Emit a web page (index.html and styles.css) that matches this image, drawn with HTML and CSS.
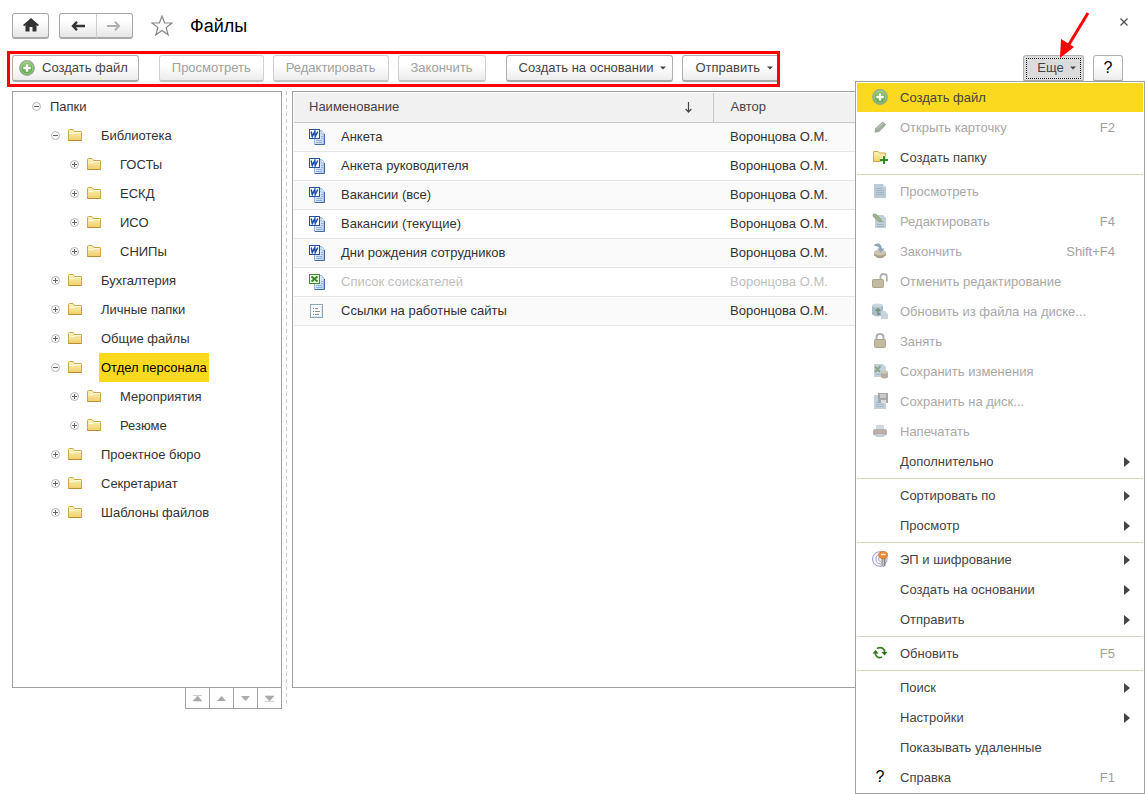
FILE: index.html
```html
<!DOCTYPE html>
<html lang="ru">
<head>
<meta charset="utf-8">
<title>Файлы</title>
<link rel="stylesheet" href="styles.css">
</head>
<body>
<svg class="defs" aria-hidden="true">
  <defs>
    <linearGradient id="gFolder" x1="0" y1="0" x2="0" y2="1"><stop offset="0" stop-color="#fdf6c4"/><stop offset="1" stop-color="#efcf68"/></linearGradient>
    <linearGradient id="gDoc" x1="0" y1="0" x2="1" y2="1"><stop offset="0" stop-color="#ffffff"/><stop offset="1" stop-color="#b3cdf0"/></linearGradient>
    <radialGradient id="gAdd" cx=".5" cy=".3" r=".7"><stop offset="0" stop-color="#a3d57e"/><stop offset="1" stop-color="#4f9c3c"/></radialGradient>
  </defs>
  <symbol id="add" viewBox="0 0 16 16"><circle cx="8" cy="8" r="7.3" fill="url(#gAdd)" stroke="#98a896" stroke-width="1.2"/><circle cx="8" cy="8" r="6" fill="none" stroke="#c4e2b2" stroke-width=".6"/><path d="M6.500 4h3v2.500h2.500v3H9.500V12h-3V9.500H4v-3h2.500z" fill="#fff" stroke="#5c9b4c" stroke-width=".5"/></symbol>
  <symbol id="folder" viewBox="0 0 16 16"><path d="M1.500 13.500V3.500q0-1 1-1h3.500l1.500 2H14q.5 0 .5.5v8.500z" fill="url(#gFolder)" stroke="#cda84a"/><path d="M2.500 6.500h5l1-1h5.500" stroke="#fffbe0" fill="none"/><path d="M1.500 13.500h13" stroke="#b88e35"/></symbol>
  <symbol id="plus" viewBox="0 0 11 11"><circle cx="5.500" cy="5.500" r="4" fill="#fff" stroke="#b4b4b4"/><path d="M3 5.500h5M5.500 3v5" stroke="#666"/></symbol>
  <symbol id="minus" viewBox="0 0 11 11"><circle cx="5.500" cy="5.500" r="4" fill="#fff" stroke="#b4b4b4"/><path d="M3 5.500h5" stroke="#666"/></symbol>
  <symbol id="word" viewBox="0 0 16 16"><path d="M5.500 1.500h7l2.500 3v11H5.500z" fill="url(#gDoc)" stroke="#8fb0dc"/><path d="M12 1.500V5h3" fill="#fff" stroke="#9ab8df"/><path d="M7 11.500h6M7 13.500h6M12 7.500h2M12 9.500h2" stroke="#8fb0dc"/><path d="M15.500 5v10.500H6" stroke="#46699f" fill="none"/><rect x=".5" y=".5" width="10" height="9" fill="#fff" stroke="#2351a3"/><path d="M2.200 2.500L3.300 7.500l2.500-5L6.200 7.500l2.600-5" fill="none" stroke="#1d4da8" stroke-width="1.500"/></symbol>
  <symbol id="excel" viewBox="0 0 16 16"><path d="M5.500 1.500h7l2.500 3v11H5.500z" fill="url(#gDoc)" stroke="#8fb0dc"/><path d="M7 11.500h6M7 13.500h6M12 7.500h2M12 9.500h2" stroke="#8fb0dc"/><path d="M15.500 5v10.500H6" stroke="#46699f" fill="none"/><rect x=".5" y=".5" width="10" height="9" fill="#eaf5e4" stroke="#3e8d2e"/><path d="M2.500 2.500l6 5M8.500 2.500l-6 5" stroke="#2f8522" stroke-width="1.800"/></symbol>
  <symbol id="text" viewBox="0 0 16 16"><rect x="1.500" y="1.500" width="12" height="13" fill="#f8fcfe" stroke="#8ca9bb"/><path d="M3 13.500h9.500V3" stroke="#dce8ef" fill="none"/><path d="M4 5.500h1M4 8.500h1M4 11.500h1" stroke="#777"/><path d="M6 5.500h3M6 8.500h5M6 11.500h4" stroke="#929292"/></symbol>
  <symbol id="pencil" viewBox="0 0 16 16"><path d="M3 9.500l7-6.500q.8-.6 1.500.1l2 1.900q.6.700 0 1.400L7 13l-4.500.7z" fill="#a1ae9f"/><path d="M5 9.500l6-5.500" stroke="#c8d1c4"/></symbol>
  <symbol id="newfolder" viewBox="0 0 16 16"><path d="M1.500 12.500V3q0-.5.5-.5h4l1.500 1.500h6v8.500z" fill="url(#gFolder)" stroke="#cda84a"/><path d="M10.500 6.500h3v3H16v3h-2.500v3h-3v-3H8v-3h2.500z" fill="#fff"/><path d="M12 7v8M8 11h8" stroke="#2f8c1e" stroke-width="2"/></symbol>
  <symbol id="doc" viewBox="0 0 16 16"><path d="M2 1h9l3 3v11H2z" fill="#bccbd5"/><path d="M11 1v3h3" fill="#dce5eb"/><path d="M4 5.500h6M4 7.500h8M4 9.500h8M4 11.500h8" stroke="#9fb6c6"/></symbol>
  <symbol id="docedit" viewBox="0 0 16 16"><path d="M3 2h8l3 3v10H3z" fill="#c0cfd8"/><path d="M5 11.500h7M5 13.500h7M9 8.500h3" stroke="#9fb6c6"/><path d="M1 1h3l5.500 5.500L9 9l-2.500-.5L1 3.500z" fill="#9bb28e" stroke="#879c7c" stroke-width=".5"/></symbol>
  <symbol id="finish" viewBox="0 0 16 16"><path d="M2 9v3.500q6 5.500 12 0V9z" fill="#aaa28f"/><ellipse cx="8" cy="9.500" rx="6" ry="3" fill="#ccc5b4"/><path d="M2.500 1.500q6-3 7.500 4h2.500L9 9.500 5 5.500h2.300Q6.500 2.500 2.500 3z" fill="#8fa5b3"/></symbol>
  <symbol id="unlock" viewBox="0 0 16 16"><path d="M8.500 6V3.500q0-2.500 3-2.500t3.300 2.500v5" fill="none" stroke="#b0b0b0" stroke-width="1.800"/><rect x=".5" y="6.500" width="11" height="8" rx="1" fill="#c3baa2" stroke="#ada48e"/></symbol>
  <symbol id="diskupd" viewBox="0 0 16 16"><path d="M0 2.500v9Q5 15 11 12V2.500z" fill="#a7bcc6"/><ellipse cx="5.500" cy="2.500" rx="5.500" ry="2" fill="#c9d6dc"/><path d="M9 8h4l3 3v5H9z" fill="#c5d4dd"/><path d="M8.500 11H6V6M3.800 8L6 5.700 8.200 8" fill="none" stroke="#719078" stroke-width="1.300"/></symbol>
  <symbol id="lock" viewBox="0 0 16 16"><path d="M4.500 7V4q0-3 3.500-3t3.500 3v3" fill="none" stroke="#b1b1b1" stroke-width="2"/><rect x="2.500" y="6.500" width="11" height="8" rx="1" fill="#c3baa2" stroke="#ada48e"/></symbol>
  <symbol id="savechg" viewBox="0 0 16 16"><path d="M2 1h9l3 3v10H2z" fill="#c3d2dd"/><path d="M4 11.500h6" stroke="#9fb6c6"/><path d="M3 3.500l5 5.500M8.500 3L3 9" stroke="#8da58d" stroke-width="2"/><path d="M9 9v5.500q3.500 2 7 0V9z" fill="#b6ae9b"/><ellipse cx="12.500" cy="9" rx="3.500" ry="1.700" fill="#d0c9ba"/></symbol>
  <symbol id="savedisk" viewBox="0 0 16 16"><path d="M2 2h12v14H2z" fill="#c1d2de"/><path d="M4 11.500h8M4 13.500h8M4 9.500h8" stroke="#9fbacd"/><path d="M6 0h10v10H7L6 9z" fill="#a7a7a7"/><path d="M8 1h6v4H8z" fill="#c9c9c9"/><path d="M9 7h5v3H9z" fill="#dedede"/></symbol>
  <symbol id="print" viewBox="0 0 16 16"><path d="M4 2h8v5H4z" fill="#d1d9df"/><path d="M3.500 6h9q2.500 0 2.500 2v2.500q0 2-2.500 2h-9Q1 12.500 1 10.500V8q0-2 2.500-2z" fill="#b2adae"/><path d="M3 9h10" stroke="#c9aaa1" stroke-width="2"/><path d="M4 11h8v3H4z" fill="#c6ccd1"/></symbol>
  <symbol id="crypt" viewBox="0 0 16 16"><circle cx="7.800" cy="8" r="7.300" fill="#f4f4fb" stroke="#9d9bd0"/><path d="M9 3Q4 3 4 8t5 5M9 5.500Q6.500 5.500 6.500 8T9 10.500" stroke="#a8a6d4" fill="none"/><path d="M9.500 7h4v7.500L11.500 16l-2-1.500z" fill="#888"/><path d="M11.200 8v7" stroke="#ddd"/><ellipse cx="11.200" cy="4" rx="4.600" ry="3.800" fill="#ef8c35" stroke="#c76c24" stroke-width=".6"/><path d="M9 3.500h4.500" stroke="#fff0df" stroke-width="1.400"/></symbol>
  <symbol id="refresh" viewBox="0 0 16 16"><path d="M5 3.500Q10 1 12.500 5.500V8M10 12Q5.500 14 3.500 9.500V7" fill="none" stroke="#348021" stroke-width="1.700"/><path d="M9.500 7h6l-3 3.500zM.5 8.500h6L3.500 5z" fill="#297414"/></symbol>
  <symbol id="sub" viewBox="0 0 6 10"><path d="M0 0l6 5-6 5z" fill="#444"/></symbol>
  <symbol id="drop" viewBox="0 0 6 4"><path d="M0 .5h6L3 3.500z" fill="#444"/></symbol>
</svg>

<header class="titlebar">
  <button class="btn nav home" aria-label="Домой"><svg width="16" height="14" viewBox="0 0 16 14"><path d="M8 0l8 7-1.200 1.200L13.500 7v6.500h-4V9h-3v4.500h-4V7L1.200 8.200 0 7z" fill="#333"/></svg></button>
  <div class="navgroup">
    <button class="nav" aria-label="Назад"><svg width="14" height="10" viewBox="0 0 14 10"><path d="M14 5H2M6 .8L2 5l4 4.200" fill="none" stroke="#333" stroke-width="2.400"/></svg></button>
    <button class="nav" aria-label="Вперед" disabled><svg width="14" height="10" viewBox="0 0 14 10"><path d="M0 5h12M8 .8L12 5 8 9.200" fill="none" stroke="#b0b0b0" stroke-width="2"/></svg></button>
  </div>
  <button class="star" aria-label="В избранное"><svg width="22" height="21" viewBox="0 0 22 21"><path d="M11 1l2.600 7H21l-5.900 4.600 2.100 7.200L11 15.400l-6.200 4.400 2.100-7.200L1 8h7.400z" fill="#fff" stroke="#858585" stroke-width="1.200"/></svg></button>
  <h1>Файлы</h1>
  <button class="close" aria-label="Закрыть"><svg width="8" height="8" viewBox="0 0 8 8"><path d="M.5.5l7 7M7.500.5l-7 7" stroke="#555" stroke-width="1.400"/></svg></button>
</header>

<div class="toolbar">
  <div class="commands">
    <button class="btn create"><svg class="i16"><use href="#add"/></svg>Создать файл</button>
    <div class="set">
      <button class="btn" disabled>Просмотреть</button>
      <button class="btn" disabled>Редактировать</button>
      <button class="btn" disabled>Закончить</button>
    </div>
    <div class="set">
      <button class="btn menu-btn">Создать на основании<svg class="drop"><use href="#drop"/></svg></button>
      <button class="btn menu-btn">Отправить<svg class="drop"><use href="#drop"/></svg></button>
    </div>
    <div class="frame"></div>
  </div>
  <div class="right">
    <button class="btn more" aria-expanded="true">Еще<svg class="drop"><use href="#drop"/></svg></button>
    <button class="btn help" aria-label="Справка">?</button>
    <svg class="pointer" width="32" height="48" viewBox="0 0 32 48"><path d="M29 2L9 35" stroke="#f00" stroke-width="3"/><path d="M1 47L2 28l13 8z" fill="#f00"/></svg>
  </div>

  <ul class="menu">
    <li><button class="active"><svg class="i16"><use href="#add"/></svg><span>Создать файл</span></button></li>
    <li><button disabled><svg class="i16"><use href="#pencil"/></svg><span>Открыть карточку</span><kbd>F2</kbd></button></li>
    <li><button><svg class="i16"><use href="#newfolder"/></svg><span>Создать папку</span></button></li>
    <li class="sep"></li>
    <li><button disabled><svg class="i16"><use href="#doc"/></svg><span>Просмотреть</span></button></li>
    <li><button disabled><svg class="i16"><use href="#docedit"/></svg><span>Редактировать</span><kbd>F4</kbd></button></li>
    <li><button disabled><svg class="i16"><use href="#finish"/></svg><span>Закончить</span><kbd>Shift+F4</kbd></button></li>
    <li><button disabled><svg class="i16"><use href="#unlock"/></svg><span>Отменить редактирование</span></button></li>
    <li><button disabled><svg class="i16"><use href="#diskupd"/></svg><span>Обновить из файла на диске...</span></button></li>
    <li><button disabled><svg class="i16"><use href="#lock"/></svg><span>Занять</span></button></li>
    <li><button disabled><svg class="i16"><use href="#savechg"/></svg><span>Сохранить изменения</span></button></li>
    <li><button disabled><svg class="i16"><use href="#savedisk"/></svg><span>Сохранить на диск...</span></button></li>
    <li><button disabled><svg class="i16"><use href="#print"/></svg><span>Напечатать</span></button></li>
    <li><button><i class="i16"></i><span>Дополнительно</span><svg class="sub"><use href="#sub"/></svg></button></li>
    <li class="sep"></li>
    <li><button><i class="i16"></i><span>Сортировать по</span><svg class="sub"><use href="#sub"/></svg></button></li>
    <li><button><i class="i16"></i><span>Просмотр</span><svg class="sub"><use href="#sub"/></svg></button></li>
    <li class="sep"></li>
    <li><button><svg class="i16"><use href="#crypt"/></svg><span>ЭП и шифрование</span><svg class="sub"><use href="#sub"/></svg></button></li>
    <li><button><i class="i16"></i><span>Создать на основании</span><svg class="sub"><use href="#sub"/></svg></button></li>
    <li><button><i class="i16"></i><span>Отправить</span><svg class="sub"><use href="#sub"/></svg></button></li>
    <li class="sep"></li>
    <li><button><svg class="i16"><use href="#refresh"/></svg><span>Обновить</span><kbd>F5</kbd></button></li>
    <li class="sep"></li>
    <li><button><i class="i16"></i><span>Поиск</span><svg class="sub"><use href="#sub"/></svg></button></li>
    <li><button><i class="i16"></i><span>Настройки</span><svg class="sub"><use href="#sub"/></svg></button></li>
    <li><button><i class="i16"></i><span>Показывать удаленные</span></button></li>
    <li><button><b class="i16">?</b><span>Справка</span><kbd>F1</kbd></button></li>
  </ul>
</div>

<main class="panes">
  <section class="left">
    <div class="tree">
      <div class="row"><button aria-label="Свернуть"><svg><use href="#minus"/></svg></button><span>Папки</span></div>
      <ul>
        <li><div class="row"><button aria-label="Свернуть"><svg><use href="#minus"/></svg></button><svg class="i16"><use href="#folder"/></svg><span>Библиотека</span></div>
          <ul>
            <li class="row"><button aria-label="Развернуть"><svg><use href="#plus"/></svg></button><svg class="i16"><use href="#folder"/></svg><span>ГОСТы</span></li>
            <li class="row"><button aria-label="Развернуть"><svg><use href="#plus"/></svg></button><svg class="i16"><use href="#folder"/></svg><span>ЕСКД</span></li>
            <li class="row"><button aria-label="Развернуть"><svg><use href="#plus"/></svg></button><svg class="i16"><use href="#folder"/></svg><span>ИСО</span></li>
            <li class="row"><button aria-label="Развернуть"><svg><use href="#plus"/></svg></button><svg class="i16"><use href="#folder"/></svg><span>СНИПы</span></li>
          </ul></li>
        <li class="row"><button aria-label="Развернуть"><svg><use href="#plus"/></svg></button><svg class="i16"><use href="#folder"/></svg><span>Бухгалтерия</span></li>
        <li class="row"><button aria-label="Развернуть"><svg><use href="#plus"/></svg></button><svg class="i16"><use href="#folder"/></svg><span>Личные папки</span></li>
        <li class="row"><button aria-label="Развернуть"><svg><use href="#plus"/></svg></button><svg class="i16"><use href="#folder"/></svg><span>Общие файлы</span></li>
        <li><div class="row"><button aria-label="Свернуть"><svg><use href="#minus"/></svg></button><svg class="i16"><use href="#folder"/></svg><span class="selected">Отдел персонала</span></div>
          <ul>
            <li class="row"><button aria-label="Развернуть"><svg><use href="#plus"/></svg></button><svg class="i16"><use href="#folder"/></svg><span>Мероприятия</span></li>
            <li class="row"><button aria-label="Развернуть"><svg><use href="#plus"/></svg></button><svg class="i16"><use href="#folder"/></svg><span>Резюме</span></li>
          </ul></li>
        <li class="row"><button aria-label="Развернуть"><svg><use href="#plus"/></svg></button><svg class="i16"><use href="#folder"/></svg><span>Проектное бюро</span></li>
        <li class="row"><button aria-label="Развернуть"><svg><use href="#plus"/></svg></button><svg class="i16"><use href="#folder"/></svg><span>Секретариат</span></li>
        <li class="row"><button aria-label="Развернуть"><svg><use href="#plus"/></svg></button><svg class="i16"><use href="#folder"/></svg><span>Шаблоны файлов</span></li>
      </ul>
    </div>
    <div class="pager">
      <button aria-label="В начало"><svg viewBox="0 0 9 7"><path d="M0 .5h9M4.500 1L9 6H0z" fill="#aaa" stroke="#aaa" stroke-width=".6"/></svg></button>
      <button aria-label="Вверх"><svg viewBox="0 0 9 7"><path d="M4.500 1L9 6H0z" fill="#aaa"/></svg></button>
      <button aria-label="Вниз"><svg viewBox="0 0 9 7"><path d="M4.500 6L9 1H0z" fill="#aaa"/></svg></button>
      <button aria-label="В конец"><svg viewBox="0 0 9 7"><path d="M0 6.500h9M4.500 6L9 1H0z" fill="#aaa" stroke="#aaa" stroke-width=".6"/></svg></button>
    </div>
  </section>
  <div class="splitter"></div>
  <section class="list">
    <table>
      <thead><tr><th class="name"><div>Наименование<svg width="7" height="11" viewBox="0 0 7 11"><path d="M3.500 0v10M.7 7l2.800 3 2.800-3" fill="none" stroke="#444" stroke-width="1.200"/></svg></div></th><th>Автор</th></tr></thead>
      <tbody>
        <tr><td><div><svg class="i16"><use href="#word"/></svg>Анкета</div></td><td>Воронцова О.М.</td></tr>
        <tr><td><div><svg class="i16"><use href="#word"/></svg>Анкета руководителя</div></td><td>Воронцова О.М.</td></tr>
        <tr><td><div><svg class="i16"><use href="#word"/></svg>Вакансии (все)</div></td><td>Воронцова О.М.</td></tr>
        <tr><td><div><svg class="i16"><use href="#word"/></svg>Вакансии (текущие)</div></td><td>Воронцова О.М.</td></tr>
        <tr><td><div><svg class="i16"><use href="#word"/></svg>Дни рождения сотрудников</div></td><td>Воронцова О.М.</td></tr>
        <tr class="muted"><td><div><svg class="i16"><use href="#excel"/></svg>Список соискателей</div></td><td>Воронцова О.М.</td></tr>
        <tr><td><div><svg class="i16"><use href="#text"/></svg>Ссылки на работные сайты</div></td><td>Воронцова О.М.</td></tr>
      </tbody>
    </table>
  </section>
</main>
</body>
</html>
```

FILE: styles.css
```css
* { box-sizing: border-box; }
body {
  margin: 0;
  min-height: 100vh;
  display: flex;
  flex-direction: column;
  background: #fff;
  color: #333;
  font: 13px/16px "Liberation Sans", Arial, sans-serif;
}
button { font: inherit; color: inherit; margin: 0; padding: 0; border: 0; background: none; }
ul { list-style: none; margin: 0; padding: 0; }
svg { display: block; flex: none; }
.defs { position: absolute; width: 0; height: 0; }
.i16 { width: 16px; height: 16px; flex: none; }
.drop { width: 6px; height: 4px; }

.btn {
  height: 27px;
  padding: 0 12px;
  display: flex;
  align-items: center;
  justify-content: center;
  white-space: nowrap;
  color: #444;
  border: 1px solid #b0b0b0;
  border-bottom: 2px solid #a8a8a8;
  border-radius: 3px;
  background: linear-gradient(#fff 40%, #ececec);
}
.btn:disabled { color: #a0a0a0; border-color: #d0d0d0; border-bottom-color: #c4c4c4; }

.titlebar { display: flex; align-items: center; height: 51px; padding: 0 17px 0 12px; }
.nav { height: 24px; display: flex; align-items: center; justify-content: center; }
.home, .navgroup {
  height: 26px;
  border: 1px solid #a8a8a8;
  border-bottom-width: 2px;
  border-radius: 3px;
  background: linear-gradient(#fff 30%, #e6e6e6);
}
.home { width: 37px; padding: 0; }
.navgroup { display: flex; width: 74px; margin-left: 10px; }
.navgroup .nav { flex: 1; }
.navgroup .nav + .nav { border-left: 1px solid #ccc; }
.star { margin-left: 18px; }
h1 { margin: 0 0 0 17px; font-size: 18px; line-height: 22px; font-weight: 400; color: #000; }
.close { margin-left: auto; padding-bottom: 8px; }

.toolbar { position: relative; display: flex; justify-content: space-between; padding: 4px 22px 9px 12px; }
.commands { position: relative; display: flex; gap: 20px; }
.set { display: flex; gap: 9px; }
.create { padding: 0 10px 0 6px; gap: 7px; }
.menu-btn { gap: 7px; padding: 0 6px 0 12px; }
.frame { position: absolute; inset: -4px 0 -5px -5px; border: 3px solid #f00; pointer-events: none; }
.right { position: relative; display: flex; gap: 9px; }
.more { width: 61px; gap: 6px; padding: 0 0 0 6px; background: #dcdcdc; outline: 1px dotted #000; outline-offset: -4px; }
.help { width: 30px; padding: 0; font-size: 16px; color: #000; }
.pointer { position: absolute; left: 36px; top: -44px; }

.menu { position: absolute; z-index: 1; top: 30px; right: 0; width: 290px; padding: 0 1px 1px; border: 1px solid #a0a0a0; background: #fff; }
.menu button {
  width: 100%;
  height: 30px;
  padding: 0 13px 0 15px;
  display: flex;
  align-items: center;
  text-align: left;
  color: #444;
  border-top: 1px solid transparent;
  background-clip: padding-box;
}
.menu button.active { background-color: #fbd91f; }
.menu button:disabled { color: #a8a8a8; }
.menu .i16 { margin-bottom: 1px; }
.menu span { flex: 1; margin-left: 12px; }
.menu kbd { margin-right: 15px; font: inherit; color: #a0a0a0; }
.menu b { text-align: center; color: #000; font-size: 16px; font-weight: 400; }
.sub { width: 6px; height: 10px; }
.sep { height: 4px; background: linear-gradient(#d8d4bd, #d8d4bd) 0 2px / 100% 1px no-repeat; }

.panes { flex: 1; display: flex; padding: 0 12px 85px; }
.left { width: 270px; flex: none; display: flex; flex-direction: column; align-items: flex-end; }
.tree { flex: 1; width: 100%; padding-left: 18px; border: 1px solid #a0a0a0; }
.tree ul { padding-left: 19px; }
.row { display: flex; align-items: center; height: 29px; }
.row button { margin-right: 6px; }
.row button svg { width: 11px; height: 11px; }
.row span { padding: 0 2px; line-height: 29px; }
.row .i16 { margin: 0 16px 1px 0; }
.row .selected { background: #fbd91f; color: #000; }
.pager { display: flex; border: 1px solid #a0a0a0; border-top: 0; }
.pager button { width: 24px; height: 20px; display: flex; align-items: center; justify-content: center; }
.pager button:first-child { width: 23px; }
.pager button + button { border-left: 1px solid #a0a0a0; }
.pager svg { width: 9px; height: 7px; }
.splitter { width: 1px; margin: 0 5px 2px 4px; background: repeating-linear-gradient(#ccc 0 4px, #fff 4px 7px); }
.list { flex: 1; margin-bottom: 21px; padding: 1px 0 0 1px; border: 1px solid #a0a0a0; }
table { width: 100%; table-layout: fixed; border-collapse: collapse; }
th, td { height: 29px; padding: 0 15px; text-align: left; font-weight: 400; border-bottom: 1px solid #e4e4e4; }
th { color: #444; background: #f1f1f1; border-bottom-color: #c8c8c8; }
th.name { width: 419px; border-right: 1px solid #c8c8c8; }
th + th, td + td { padding-left: 17px; }
th div { display: flex; justify-content: space-between; padding-right: 6px; align-items: center; }
td div { display: flex; align-items: center; gap: 16px; }
tbody tr:nth-child(odd) { background: #fafafa; }
.muted { color: #c0c0c0; }
```
